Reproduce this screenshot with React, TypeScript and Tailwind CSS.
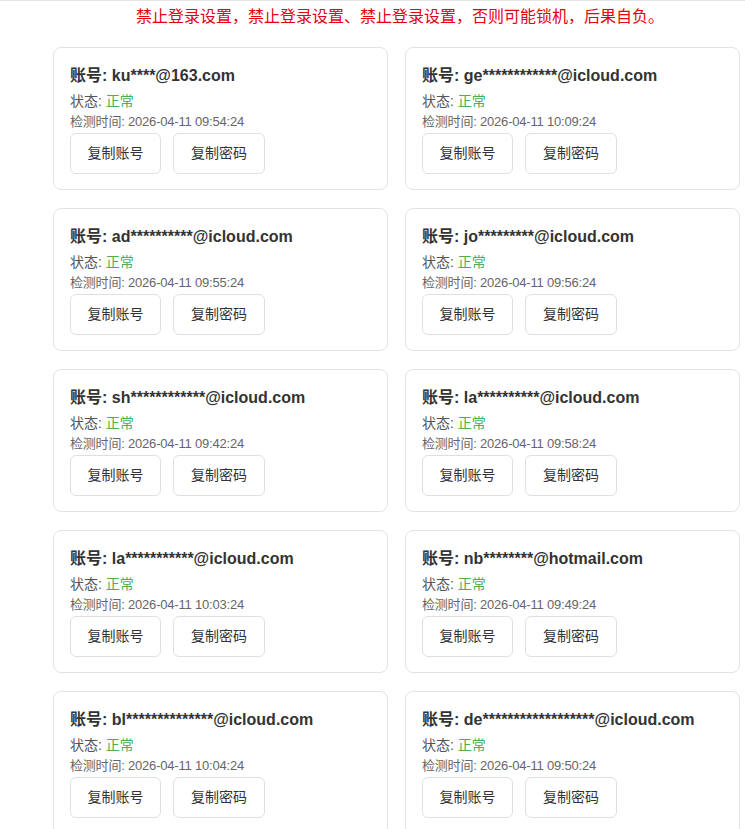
const accounts = [
  { name: 'ku****@163.com', time: '2026-04-11 09:54:24' },
  { name: 'ge************@icloud.com', time: '2026-04-11 10:09:24' },
  { name: 'ad**********@icloud.com', time: '2026-04-11 09:55:24' },
  { name: 'jo*********@icloud.com', time: '2026-04-11 09:56:24' },
  { name: 'sh************@icloud.com', time: '2026-04-11 09:42:24' },
  { name: 'la**********@icloud.com', time: '2026-04-11 09:58:24' },
  { name: 'la***********@icloud.com', time: '2026-04-11 10:03:24' },
  { name: 'nb********@hotmail.com', time: '2026-04-11 09:49:24' },
  { name: 'bl**************@icloud.com', time: '2026-04-11 10:04:24' },
  { name: 'de******************@icloud.com', time: '2026-04-11 09:50:24' },
];

function AccountCard({ name, time }: { name: string; time: string }) {
  return (
    <div className="h-[143px] rounded-lg border border-[#e3e3e3] bg-white px-4 pt-4">
      <div className="text-[16px] leading-6 font-bold text-[#333]">账号: {name}</div>
      <div className="mt-[3px] text-[14px] leading-5 text-[#555]">
        状态: <span className="text-[#4caf50]">正常</span>
      </div>
      <div className="mt-[2px] text-[13px] leading-[18px] text-[#666] tracking-[-0.2px]">检测时间: {time}</div>
      {/* buttons */}
      <div className="mt-[2px] flex gap-3">
        <button className="h-[41px] w-[91px] rounded-md border border-[#e0e0e0] bg-white text-[14px] text-[#333]">
          复制账号
        </button>
        <button className="h-[41px] w-[92px] rounded-md border border-[#e0e0e0] bg-white text-[14px] text-[#333]">
          复制密码
        </button>
      </div>
    </div>
  );
}

export default function App() {
  return (
    <div
      className="min-h-screen w-full overflow-hidden border-t border-[#e5e5e5] bg-white"
      style={{ fontFamily: '"Liberation Sans", Arial, "Noto Sans CJK SC", sans-serif' }}
    >
      <div className="w-[800px]">
        <p className="pt-[4px] text-center text-[16px] leading-6 text-[#e60012]">
          禁止登录设置，禁止登录设置、禁止登录设置，否则可能锁机，后果自负。
        </p>
        <div className="mt-[18px] grid grid-cols-[335px_335px] gap-x-[17px] gap-y-[18px] px-[53px]">
          {accounts.map((a, i) => (
            <AccountCard key={i} name={a.name} time={a.time} />
          ))}
        </div>
      </div>
    </div>
  );
}
